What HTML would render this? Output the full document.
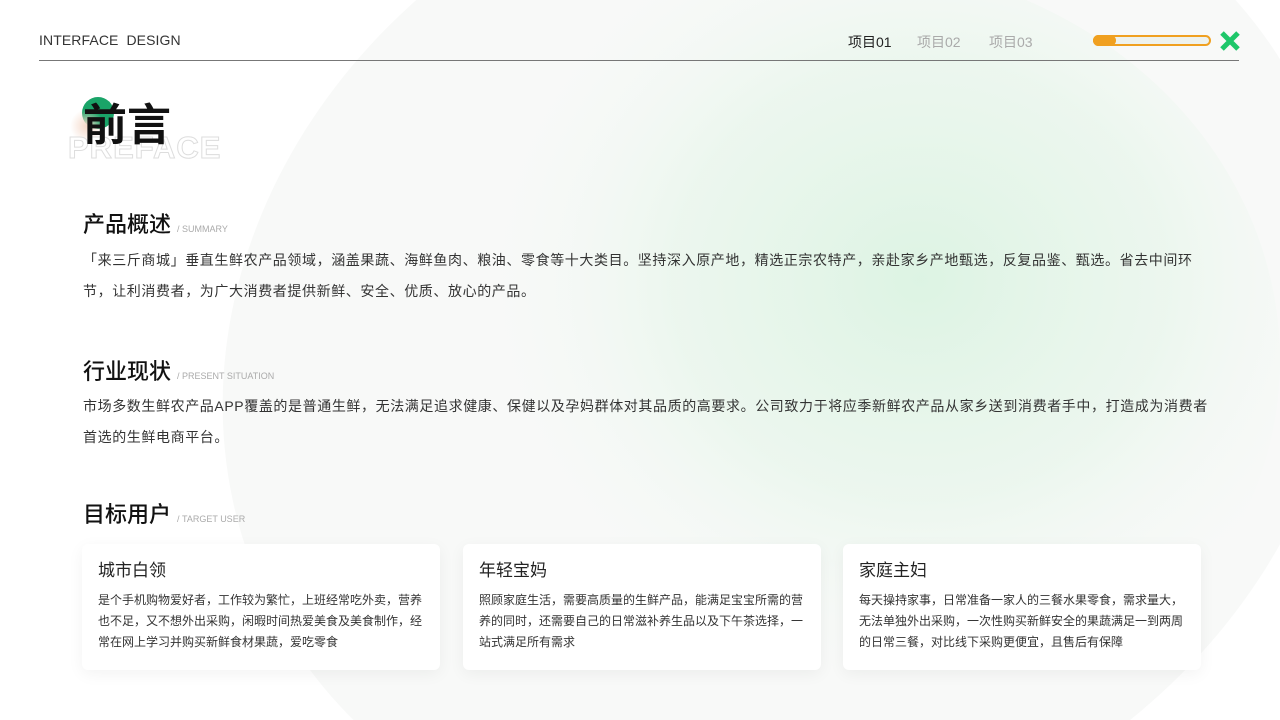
<!DOCTYPE html>
<html><head><meta charset="utf-8"><style>
*{margin:0;padding:0;box-sizing:border-box}
html,body{width:1280px;height:720px;overflow:hidden}
body{background:#fff;font-family:"Liberation Sans","Noto Sans CJK SC",sans-serif;color:#222}
#w{position:relative;width:1280px;height:720px;overflow:hidden}
.abs{position:absolute}
.nav{font-size:14px;color:#333}
.line{position:absolute;left:39px;top:60px;width:1200px;height:1px;background:#777}
h2{position:absolute;font-size:22px;font-weight:500;color:#111}
h2 span{font-size:9px;color:#aaa;font-weight:400;margin-left:6px}
p.b{position:absolute;left:83px;width:1130px;font-size:14px;line-height:31px;color:#333;letter-spacing:.6px}
.card{position:absolute;top:544px;width:358px;height:126px;background:#fff;border-radius:6px;box-shadow:0 4px 16px rgba(0,0,0,.05);padding:12px 16px}
.card h3{font-size:17px;font-weight:400;color:#222;margin-bottom:9px}
.card p{font-size:12px;line-height:21px;color:#333}
</style></head><body><div id="w">
<svg class="abs" style="left:0;top:0" width="1280" height="720" viewBox="0 0 1280 720">
<defs><radialGradient id="g" cx="0.6" cy="0.4" r="0.5"><stop offset="0" stop-color="#d6f2de" stop-opacity=".8"/><stop offset=".55" stop-color="#e4f5e8" stop-opacity=".6"/><stop offset="1" stop-color="#f5faf6" stop-opacity="0"/></radialGradient></defs>
<ellipse cx="785" cy="350" rx="575" ry="500" transform="rotate(-25 785 350)" fill="#f8f9f8"/>
<ellipse cx="830" cy="360" rx="450" ry="400" fill="url(#g)"/>
</svg>
<div class="abs nav" style="left:39px;top:32px;letter-spacing:.1px">INTERFACE&nbsp; DESIGN</div>
<div class="abs nav" style="left:848px;top:32px;color:#222">项目01</div>
<div class="abs nav" style="left:917px;top:32px;color:#aaa">项目02</div>
<div class="abs nav" style="left:989px;top:32px;color:#aaa">项目03</div>
<div class="abs" style="left:1093px;top:35px;width:118px;height:11px;border:2px solid #f0a020;border-radius:6px;background:#eef2ee"></div>
<div class="abs" style="left:1093px;top:35px;width:23px;height:11px;border-radius:6px;background:#f0a020"></div>
<svg class="abs" style="left:1219px;top:30px" width="22" height="22" viewBox="0 0 22 22"><path d="M3 3L19 19M19 3L3 19" stroke="#1ec76a" stroke-width="5"/></svg>
<div class="line"></div>
<div class="abs" style="left:82px;top:97px;width:32px;height:32px;border-radius:50%;background:#1aa468"></div>
<div class="abs" style="left:70px;top:109px;width:34px;height:34px;border-radius:50%;background:radial-gradient(circle,#f4d8c8,rgba(255,255,255,0) 70%)"></div>
<div class="abs" style="left:68px;top:130px;font-size:31px;font-weight:700;color:#fff;-webkit-text-stroke:1px #ddd;letter-spacing:1px">PREFACE</div>
<div class="abs" style="left:83px;top:98px;font-size:44px;font-weight:700;color:#111;line-height:56px">前言</div>
<h2 style="left:83px;top:207px">产品概述<span>/ SUMMARY</span></h2>
<p class="b" style="top:245px">「来三斤商城」垂直生鲜农产品领域，涵盖果蔬、海鲜鱼肉、粮油、零食等十大类目。坚持深入原产地，精选正宗农特产，亲赴家乡产地甄选，反复品鉴、甄选。省去中间环节，让利消费者，为广大消费者提供新鲜、安全、优质、放心的产品。</p>
<h2 style="left:83px;top:354px">行业现状<span>/ PRESENT SITUATION</span></h2>
<p class="b" style="top:391px">市场多数生鲜农产品APP覆盖的是普通生鲜，无法满足追求健康、保健以及孕妈群体对其品质的高要求。公司致力于将应季新鲜农产品从家乡送到消费者手中，打造成为消费者首选的生鲜电商平台。</p>
<h2 style="left:83px;top:497px">目标用户<span>/ TARGET USER</span></h2>
<div class="card" style="left:82px"><h3>城市白领</h3><p>是个手机购物爱好者，工作较为繁忙，上班经常吃外卖，营养也不足，又不想外出采购，闲暇时间热爱美食及美食制作，经常在网上学习并购买新鲜食材果蔬，爱吃零食</p></div>
<div class="card" style="left:463px"><h3>年轻宝妈</h3><p>照顾家庭生活，需要高质量的生鲜产品，能满足宝宝所需的营养的同时，还需要自己的日常滋补养生品以及下午茶选择，一站式满足所有需求</p></div>
<div class="card" style="left:843px"><h3>家庭主妇</h3><p>每天操持家事，日常准备一家人的三餐水果零食，需求量大，无法单独外出采购，一次性购买新鲜安全的果蔬满足一到两周的日常三餐，对比线下采购更便宜，且售后有保障</p></div>
</div></body></html>
